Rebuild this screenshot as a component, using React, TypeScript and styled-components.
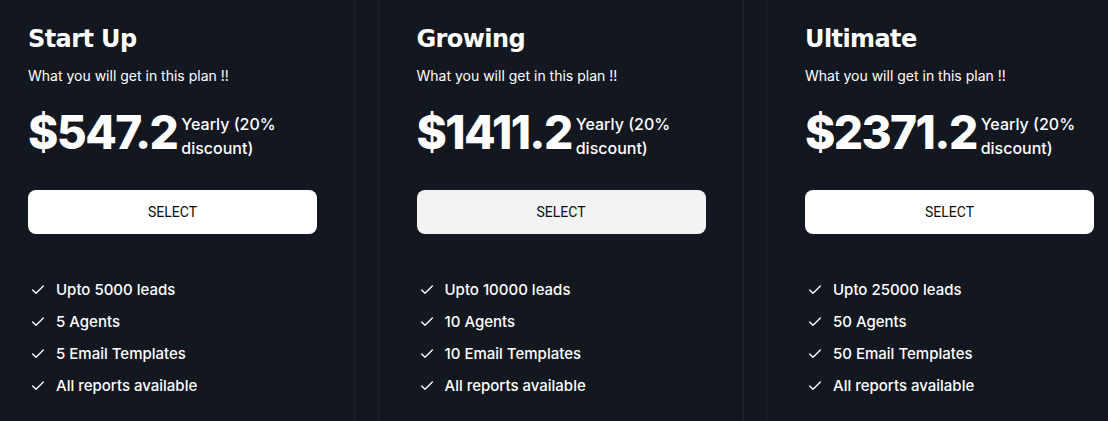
import React from "react";
import styled, { createGlobalStyle } from "styled-components";
import { Check } from "lucide-react";

const GlobalStyle = createGlobalStyle`
  html, body {
    margin: 0;
    padding: 0;
    background-color: #121720;
    overflow: hidden;
  }
  * {
    box-sizing: border-box;
  }
`;

const Page = styled.div`
  height: 421px;
  overflow: hidden;
  background-color: #121720;
`;

const Row = styled.div`
  display: flex;
  gap: 22.5px;
  margin-left: -11px;
  height: 100%;
`;

const Card = styled.div`
  flex: 0 0 364px;
  display: flex;
  flex-direction: column;
  padding: 22px 37px 0 38px;
  border-left: 1px solid #1e2530;
  border-right: 1px solid #1e2530;
  background-color: #121720;
`;

const Title = styled.h2`
  margin: 0;
  font-family: "DejaVu Sans", sans-serif;
  font-size: 24px;
  font-weight: 700;
  letter-spacing: -0.6px;
  line-height: 34px;
  color: #ffffff;
`;

const Subtitle = styled.p`
  margin: 10px 0 0;
  font-family: Inter, sans-serif;
  font-size: 14px;
  line-height: 20px;
  color: #ffffff;
`;

const PriceRow = styled.div`
  display: flex;
  align-items: flex-start;
  gap: 4px;
  margin-top: 21px;
`;

const Price = styled.span`
  font-family: Inter, sans-serif;
  font-size: 46px;
  font-weight: 800;
  letter-spacing: -1.6px;
  line-height: 50px;
  color: #ffffff;
`;

const Period = styled.span`
  font-family: Inter, sans-serif;
  font-size: 16px;
  font-weight: 500;
  line-height: 24px;
  color: #ffffff;
  width: 100px;
  padding-top: 5px;
`;

const SelectButton = styled.button<{ $muted?: boolean }>`
  margin-top: 30px;
  width: 289px;
  height: 44px;
  border: none;
  border-radius: 8px;
  background-color: ${(p) => (p.$muted ? "#f3f3f3" : "#ffffff")};
  font-family: Roboto, sans-serif;
  font-size: 14px;
  font-weight: 400;
  color: #0d0d0d;
  cursor: pointer;
`;

const Features = styled.ul`
  list-style: none;
  margin: 44px 0 0;
  padding: 0 0 0 2px;
  display: flex;
  flex-direction: column;
  gap: 8px;
`;

const Feature = styled.li`
  display: flex;
  align-items: center;
  gap: 10px;
  font-family: Inter, sans-serif;
  font-size: 15px;
  font-weight: 500;
  line-height: 24px;
  color: #ffffff;
`;

const plans = [
  {
    name: "Start Up",
    price: "$547.2",
    muted: false,
    features: ["Upto 5000 leads", "5 Agents", "5 Email Templates", "All reports available"],
  },
  {
    name: "Growing",
    price: "$1411.2",
    muted: true,
    features: ["Upto 10000 leads", "10 Agents", "10 Email Templates", "All reports available"],
  },
  {
    name: "Ultimate",
    price: "$2371.2",
    muted: false,
    features: ["Upto 25000 leads", "50 Agents", "50 Email Templates", "All reports available"],
  },
];

function App() {
  return (
    <Page>
      <GlobalStyle />
      <Row>
        {plans.map((plan) => (
          <Card key={plan.name}>
            <Title>{plan.name}</Title>
            <Subtitle>What you will get in this plan !!</Subtitle>
            <PriceRow>
              <Price>{plan.price}</Price>
              <Period>Yearly (20% discount)</Period>
            </PriceRow>
            <SelectButton $muted={plan.muted}>SELECT</SelectButton>
            <Features>
              {plan.features.map((f) => (
                <Feature key={f}>
                  <Check size={16} strokeWidth={2} color="#ffffff" />
                  {f}
                </Feature>
              ))}
            </Features>
          </Card>
        ))}
      </Row>
    </Page>
  );
}

export default App;
